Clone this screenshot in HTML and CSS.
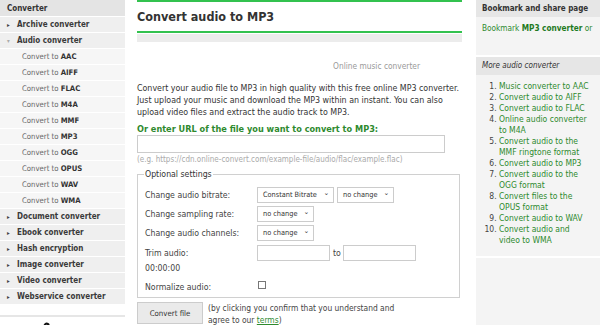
FILE: index.html
```html
<!DOCTYPE html>
<html>
<head>
<meta charset="utf-8">
<link rel="stylesheet" href="styles.css">
</head>
<body>
<div class="page">
  <aside class="left">
    <div class="lhead">Converter</div>
    <div class="cat"><span class="tri">&#9656;</span>Archive converter</div>
    <div class="cat"><span class="tri open">&#9662;</span>Audio converter</div>
    <div class="sub">Convert to <b>AAC</b></div>
    <div class="sub">Convert to <b>AIFF</b></div>
    <div class="sub">Convert to <b>FLAC</b></div>
    <div class="sub">Convert to <b>M4A</b></div>
    <div class="sub">Convert to <b>MMF</b></div>
    <div class="sub">Convert to <b>MP3</b></div>
    <div class="sub">Convert to <b>OGG</b></div>
    <div class="sub">Convert to <b>OPUS</b></div>
    <div class="sub">Convert to <b>WAV</b></div>
    <div class="sub">Convert to <b>WMA</b></div>
    <div class="cat"><span class="tri">&#9656;</span>Document converter</div>
    <div class="cat"><span class="tri">&#9656;</span>Ebook converter</div>
    <div class="cat"><span class="tri">&#9656;</span>Hash encryption</div>
    <div class="cat"><span class="tri">&#9656;</span>Image converter</div>
    <div class="cat"><span class="tri">&#9656;</span>Video converter</div>
    <div class="cat"><span class="tri">&#9656;</span>Webservice converter</div>
    <div class="lfoot"><svg class="logo" width="14" height="14" viewBox="0 0 14 14"><path d="M11 3 C9 0.5 6.5 1.5 6.5 4.5 L6.5 14" fill="none" stroke="#111" stroke-width="2.2"/></svg></div>
  </aside>
  <main class="main">
    <div class="titlebar"><h1>Convert audio to MP3</h1></div>
    <div class="graybar"></div>
    <div class="tagline">Online music converter</div>
    <p class="intro">Convert your audio file to MP3 in high quality with this free online MP3 converter. Just upload your music and download the MP3 within an instant. You can also upload video files and extract the audio track to MP3.</p>
    <div class="urllabel">Or enter URL of the file you want to convert to MP3:</div>
    <input class="urlinput" type="text">
    <div class="example">(e.g. https://cdn.online-convert.com/example-file/audio/flac/example.flac)</div>
    <fieldset class="opts">
      <legend>Optional settings</legend>
      <div class="row"><span class="lbl">Change audio bitrate:</span><span class="sel w76">Constant Bitrate <i>&#8964;</i></span><span class="sel w56">no change <i>&#8964;</i></span></div>
      <div class="row"><span class="lbl">Change sampling rate:</span><span class="sel w58">no change <i>&#8964;</i></span></div>
      <div class="row"><span class="lbl">Change audio channels:</span><span class="sel w58">no change <i>&#8964;</i></span></div>
      <div class="row trim"><span class="lbl">Trim audio:</span><span class="box"></span><span class="to">to</span><span class="box"></span></div>
      <div class="time">00:00:00</div>
      <div class="row norm"><span class="lbl">Normalize audio:</span><span class="check"></span></div>
    </fieldset>
    <div class="submit">
      <button class="btn">Convert file</button>
      <div class="terms">(by clicking you confirm that you understand and agree to our <a href="#">terms</a>)</div>
    </div>
  </main>
  <aside class="right">
    <div class="rbox">
      <div class="rhead">Bookmark and share page</div>
      <div class="rbody">Bookmark <b>MP3 converter</b> or</div>
    </div>
    <div class="rbox more">
      <div class="rhead ital">More audio converter</div>
      <ol class="list">
        <li><a>Music converter to AAC</a></li>
        <li><a>Convert audio to AIFF</a></li>
        <li><a>Convert audio to FLAC</a></li>
        <li><a>Online audio converter to M4A</a></li>
        <li><a>Convert audio to the MMF ringtone format</a></li>
        <li><a>Convert audio to MP3</a></li>
        <li><a>Convert audio to the OGG format</a></li>
        <li><a>Convert files to the OPUS format</a></li>
        <li><a>Convert audio to WAV</a></li>
        <li><a>Convert audio and<br>video to WMA</a></li>
      </ol>
    </div>
  </aside>
</div>
</body>
</html>
```
FILE: styles.css
```css
* { box-sizing: border-box; }
html, body { margin: 0; padding: 0; background: #fff; }
body {
  font-family: "DejaVu Sans Condensed", "DejaVu Sans", sans-serif;
  font-size: 8.7px;
  color: #333;
  width: 600px;
  height: 325px;
  overflow: hidden;
}
.page { display: flex; align-items: flex-start; }

/* left */
.left { width: 125px; flex: none; background: #fff; font-size: 8px; }
.lhead {
  height: 17px; line-height: 17px; padding-left: 7px;
  background: #e4e4e4; font-weight: bold; color: #333; border-bottom: 1px solid #fff;
}
.cat {
  height: 16px; line-height: 15px; padding-left: 7px;
  background: #efefef; border-bottom: 1px solid #fff;
  font-weight: bold; color: #3a3a3a;
}
.tri { display: inline-block; width: 10px; font-size: 6px; color: #444; }
.tri.open { color: #aaa; }
.sub {
  height: 16px; line-height: 15px; padding-left: 22px;
  background: #f6f6f6; border-bottom: 1px solid #fff;
  color: #666; font-size: 7.7px;
}
.sub b { color: #333; }
.lfoot {
  margin-top: 10px; border-top: 2px solid #e6e6e6; height: 20px;
  position: relative;
}
.logo { position: absolute; left: 38px; top: 5px; }

/* main */
.main { width: 325px; flex: none; margin-left: 12px; }
.titlebar { border-top: 2px solid #33c24f; border-bottom: 2px solid #33c24f; height: 33px; margin-top: 0; }
h1 { margin: 0; font-family: "DejaVu Sans Condensed", "DejaVu Sans", sans-serif; font-size: 12.5px; line-height: 30px; color: #333; }
.graybar { height: 8px; background: #ececec; margin-top: 1px; }
.tagline { text-align: right; padding-right: 42px; color: #999; font-size: 8.3px; margin-top: 19px; height: 12px; }
.intro { margin: 9px 0 0; line-height: 12px; color: #333; font-size: 8.8px; }
.urllabel { margin-top: 6px; color: #2e8a2e; font-weight: bold; font-size: 9.1px; }
.urlinput { display: block; width: 308px; height: 18px; margin-top: 1px; border: 1px solid #ccc; padding: 0; }
.example { color: #aaa; font-size: 8px; margin-top: 2px; }
.opts { margin: 5px 0 0; border: 1px solid #d0d0d0; padding: 6px 8px 1px 7px; width: 323px; }
.opts legend { padding: 0 1px; margin-left: -1px; color: #333; }
.row { display: flex; align-items: center; height: 19px; }
.lbl { width: 112px; flex: none; color: #444; }
.sel {
  display: inline-flex; justify-content: space-between; align-items: center;
  height: 16px; border: 1px solid #ccc; background: #fff; padding: 0 4px 0 5px;
  font-size: 7.3px; color: #333; margin-right: 3px;
}
.sel i { font-style: normal; font-size: 7px; margin-top: -3px; }
.w76 { width: 77px; } .w56 { width: 57px; } .w58 { width: 57px; }
.trim { height: 18px; margin-top: 2px; }
.box { display: inline-block; width: 73px; height: 16px; border: 1px solid #ccc; background: #fff; }
.to { width: 13px; padding-left: 3px; color: #444; }
.time { color: #444; height: 12px; line-height: 12px; }
.norm { height: 19px; margin-top: 3px; }
.check { width: 8px; height: 8px; border: 1px solid #777; margin-left: 1px; margin-top: -4px; }
.submit { display: flex; margin-top: 4px; }
.btn {
  width: 66px; height: 22px; flex: none; border: 1px solid #ccc; background: #eaeaea;
  font-family: inherit; font-size: 7.8px; color: #333; padding: 0;
}
.terms { margin-left: 5px; width: 200px; line-height: 12px; color: #444; margin-top: 0; font-size: 8.4px; }
.terms a { color: #2e8a2e; text-decoration: underline; }

/* right */
.right { width: 124px; flex: none; margin-left: 14px; background: #f4f4f4; height: 325px; font-size: 8.2px; }
.rbox { background: #f4f4f4; }
.rhead { height: 17px; line-height: 17px; padding-left: 6px; background: #e6e6e6; font-weight: bold; color: #333; font-size: 8px; }
.rhead.ital { font-style: italic; font-weight: normal; color: #333; height: 18px; line-height: 18px; }
.rbody { padding: 6px 6px 0; height: 38px; color: #2e8a2e; }
.rbody b { color: #1f7a1f; }
.more { border-top: 2px solid #fff; border-bottom: 2px solid #fff; }
.list { margin: 0; padding: 6px 9px 10px 23px; color: #444; line-height: 11px; font-size: 8.5px; }
.list a { color: #2e8a2e; }
```
